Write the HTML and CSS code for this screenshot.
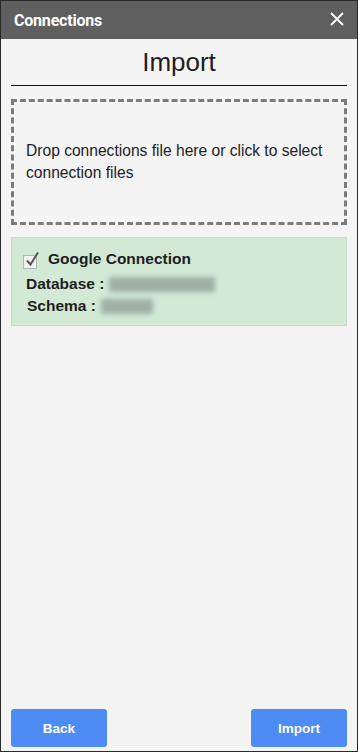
FILE: index.html
```html
<!DOCTYPE html>
<html>
<head>
<meta charset="utf-8">
<link rel="stylesheet" href="styles.css">
</head>
<body>
<div class="frame">
  <div class="header">
    <span class="header-title">Connections</span>
    <svg class="close" width="14" height="14" viewBox="0 0 14 14"><path d="M1 1 L13 13 M13 1 L1 13" stroke="#fff" stroke-width="1.8" fill="none"/></svg>
  </div>
  <div class="content">
    <div class="title">Import</div>
    <div class="drop">Drop connections file here or click to select connection files</div>
    <div class="card">
      <div class="row row-name">
        <span class="check">
          <svg width="16" height="18" viewBox="0 0 16 18"><path d="M3 10.5 L6.5 14.5 L14 2.5" stroke="#555" stroke-width="2" fill="none"/></svg>
        </span>
        <span class="name">Google Connection</span>
      </div>
      <div class="row row-db">Database : <span class="blur blur-db"></span></div>
      <div class="row row-schema">Schema : <span class="blur blur-schema"></span></div>
    </div>
    <div class="footer">
      <button class="btn">Back</button>
      <button class="btn">Import</button>
    </div>
  </div>
</div>
</body>
</html>
```
FILE: styles.css
```css
html, body {
  margin: 0;
  padding: 0;
}
body {
  font-family: "Liberation Sans", Arial, sans-serif;
  color: #222;
}
.frame {
  width: 358px;
  height: 752px;
  box-sizing: border-box;
  border: 1px solid #2a2a2a;
  background: #f4f4f4;
  display: flex;
  flex-direction: column;
}
.header {
  height: 38px;
  flex: none;
  background: #5f5f5f;
  display: flex;
  align-items: center;
  justify-content: space-between;
  padding: 0 13px 0 13px;
}
.header-title {
  font-family: Roboto, sans-serif;
  font-weight: bold;
  font-size: 16px;
  color: #fff;
  letter-spacing: -0.2px;
}
.close {
  display: block;
  margin-top: -2px;
}
.content {
  flex: 1;
  padding: 0 10px;
  display: flex;
  flex-direction: column;
}
.title {
  height: 46px;
  line-height: 46px;
  text-align: center;
  font-size: 26px;
  color: #1e1e1e;
  border-bottom: 1px solid #111;
}
.drop {
  margin-top: 13px;
  height: 126px;
  box-sizing: border-box;
  border: 3px dashed #7b7b7b;
  padding: 0 12px;
  display: flex;
  align-items: center;
  font-size: 15.6px;
  line-height: 22px;
  color: #222;
}
.card {
  margin-top: 12px;
  height: 89px;
  box-sizing: border-box;
  background: #d2e9d6;
  border: 1px solid #c6d9ca;
  padding: 10px 11px 0 11px;
}
.row {
  font-weight: bold;
  font-size: 15.5px;
  line-height: 22px;
  color: #1e1e1e;
  display: flex;
  align-items: center;
}
.row-name {
  margin-bottom: 3px;
}
.row-db {
  padding-left: 3px;
}
.row-schema {
  padding-left: 4px;
}
.check {
  position: relative;
  width: 12px;
  height: 12px;
  border: 1px solid #b5b5b5;
  background: #f2f2f2;
  margin-right: 11px;
  margin-top: 5px;
  flex: none;
}
.check svg {
  position: absolute;
  left: 0;
  top: -6px;
}
.blur {
  display: inline-block;
  height: 15px;
  background: #a0b0a4;
  filter: blur(2.5px);
  margin-left: 5px;
}
.blur-db {
  width: 106px;
}
.blur-schema {
  width: 52px;
}
.footer {
  margin-top: auto;
  padding-bottom: 4px;
  display: flex;
  justify-content: space-between;
}
.btn {
  width: 96px;
  height: 38px;
  border: none;
  border-radius: 3px;
  background: #4d8bf5;
  color: #fff;
  font-family: "Liberation Sans", Arial, sans-serif;
  font-weight: bold;
  font-size: 13.5px;
  padding: 0;
}
```
